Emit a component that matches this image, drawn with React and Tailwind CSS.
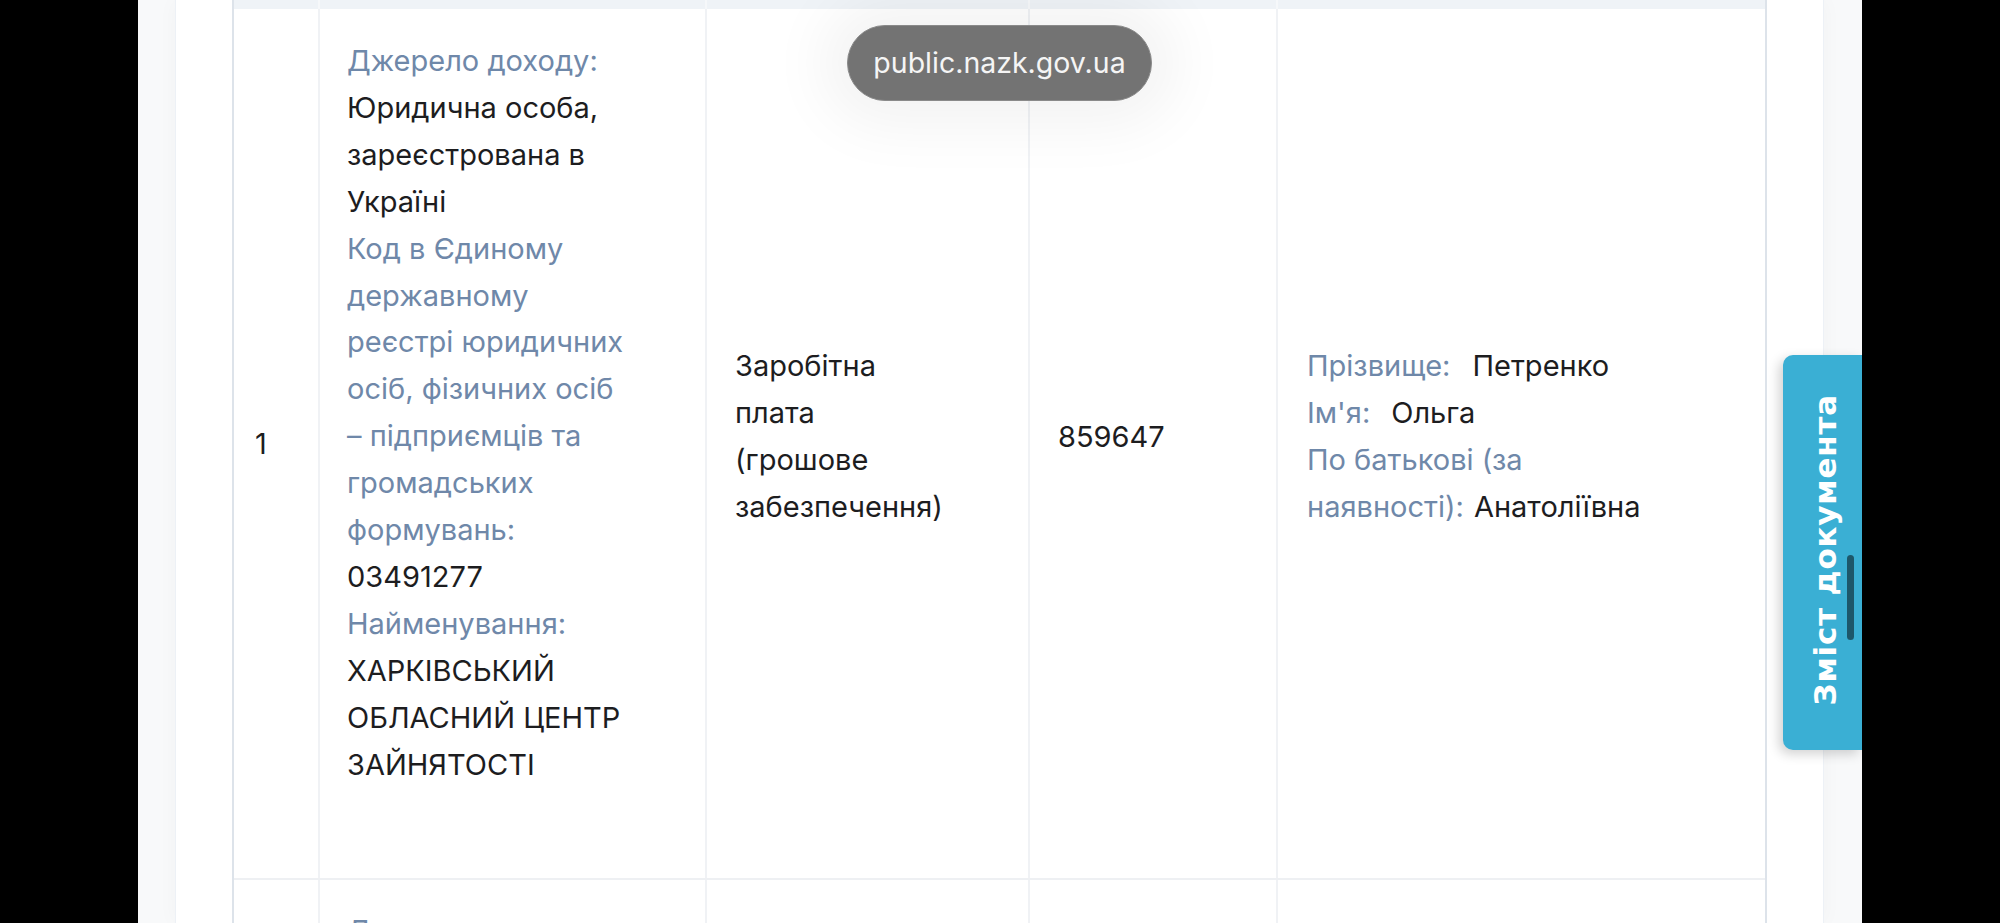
export default function App() {
  const L = "text-[#6f88a9]";
  const V = "text-[#1d1d1f]";
  const col2Lines = [
    ["Джерело доходу:", L],
    ["Юридична особа,", V],
    ["зареєстрована в", V],
    ["Україні", V],
    ["Код в Єдиному", L],
    ["державному", L],
    ["реєстрі юридичних", L],
    ["осіб, фізичних осіб", L],
    ["– підприємців та", L],
    ["громадських", L],
    ["формувань:", L],
    ["03491277", V],
    ["Найменування:", L],
    ["ХАРКІВСЬКИЙ", V],
    ["ОБЛАСНИЙ ЦЕНТР", V],
    ["ЗАЙНЯТОСТІ", V],
  ];
  return (
    <div className="relative w-[2000px] h-[923px] overflow-hidden bg-black flex font-['Inter',sans-serif] text-[29px] leading-[46.9px]">
      <div className="w-[138px] shrink-0 bg-black" />
      <div className="w-[1724px] shrink-0 h-full bg-[#f8f9fa] px-[37px] flex">
        <div className="w-[1649px] h-full bg-white border-x border-[#edf1f6] px-[56px] shadow-[0_0_20px_rgba(0,0,0,0.03)]">
          <div className="w-[1535px] h-full border-x-2 border-[#dde3ea] flex flex-col">
            {/* header strip */}
            <div className="h-[9px] shrink-0 flex bg-[#eff3f7]">
              <div className="w-[86px] border-r-2 border-[#f6f8fa]" />
              <div className="w-[387px] border-r-2 border-[#f6f8fa]" />
              <div className="w-[323px] border-r-2 border-[#f6f8fa]" />
              <div className="w-[248px] border-r-2 border-[#f6f8fa]" />
              <div className="flex-1" />
            </div>
            {/* row 1 */}
            <div className="h-[871px] shrink-0 flex border-b-2 border-[#eef0f3]">
              <div className="w-[86px] border-r-2 border-[#f0f2f5] pl-[21px] pt-[2px] flex items-center">
                <span className={V}>1</span>
              </div>
              <div className="w-[387px] border-r-2 border-[#f0f2f5] pl-[27px] pt-[29px]">
                {col2Lines.map(([t, c], i) => (
                  <div key={i} className={`whitespace-nowrap ${c}`}>{t}</div>
                ))}
              </div>
              <div className="w-[323px] border-r-2 border-[#f0f2f5] pl-[28px] pb-[13px] flex flex-col justify-center">
                <div className={`whitespace-nowrap ${V}`}>Заробітна</div>
                <div className={`whitespace-nowrap ${V}`}>плата</div>
                <div className={`whitespace-nowrap ${V}`}>(грошове</div>
                <div className={`whitespace-nowrap ${V}`}>забезпечення)</div>
              </div>
              <div className="w-[248px] border-r-2 border-[#f0f2f5] pl-[28px] pb-[12px] flex items-center">
                <span className={V}>859647</span>
              </div>
              <div className="flex-1 pl-[29px] pb-[13px] flex flex-col justify-center">
                <div className="whitespace-nowrap">
                  <span className={L}>Прізвище:</span>
                  <span className={`${V} ml-[22px]`}>Петренко</span>
                </div>
                <div className="whitespace-nowrap">
                  <span className={L}>Ім'я:</span>
                  <span className={`${V} ml-[21px]`}>Ольга</span>
                </div>
                <div className={`whitespace-nowrap ${L}`}>По батькові (за</div>
                <div className="whitespace-nowrap">
                  <span className={L}>наявності):</span>
                  <span className={`${V} ml-[10px]`}>Анатоліївна</span>
                </div>
              </div>
            </div>
            {/* row 2 */}
            <div className="flex-1 flex">
              <div className="w-[86px] border-r-2 border-[#f0f2f5]" />
              <div className="w-[387px] border-r-2 border-[#f0f2f5] pl-[27px] pt-[28px]">
                <div className={`whitespace-nowrap ${L}`}>Джерело доходу:</div>
              </div>
              <div className="w-[323px] border-r-2 border-[#f0f2f5]" />
              <div className="w-[248px] border-r-2 border-[#f0f2f5]" />
              <div className="flex-1" />
            </div>
          </div>
        </div>
      </div>
      <div className="flex-1 bg-black" />

      {/* Safari URL pill */}
      <div className="absolute left-[847px] top-[25px] w-[305px] h-[76px] rounded-full bg-[#6c6c6c]/95 border border-[#8a8a8a] shadow-[0_0_60px_25px_rgba(0,0,0,0.05)] flex items-center justify-center">
        <span className="text-[#f5f5f5] text-[28.5px] leading-none font-['Inter',sans-serif] pt-[1px]">public.nazk.gov.ua</span>
      </div>

      {/* side tab */}
      <div className="absolute left-[1783px] top-[355px] w-[79px] h-[395px] rounded-l-[10px] bg-[#3aafd4] shadow-[-4px_4px_12px_rgba(0,0,0,0.18)] flex items-center justify-center pb-[6px] pl-[6px]">
        <span className="[writing-mode:vertical-rl] rotate-180 text-white font-bold text-[31px] tracking-[0.8px] leading-none whitespace-nowrap font-['DejaVu_Sans',sans-serif]">
          Зміст документа
        </span>
      </div>
      {/* scroll indicator */}
      <div className="absolute left-[1847px] top-[555px] w-[7px] h-[85px] rounded-full bg-black/50" />
    </div>
  );
}
